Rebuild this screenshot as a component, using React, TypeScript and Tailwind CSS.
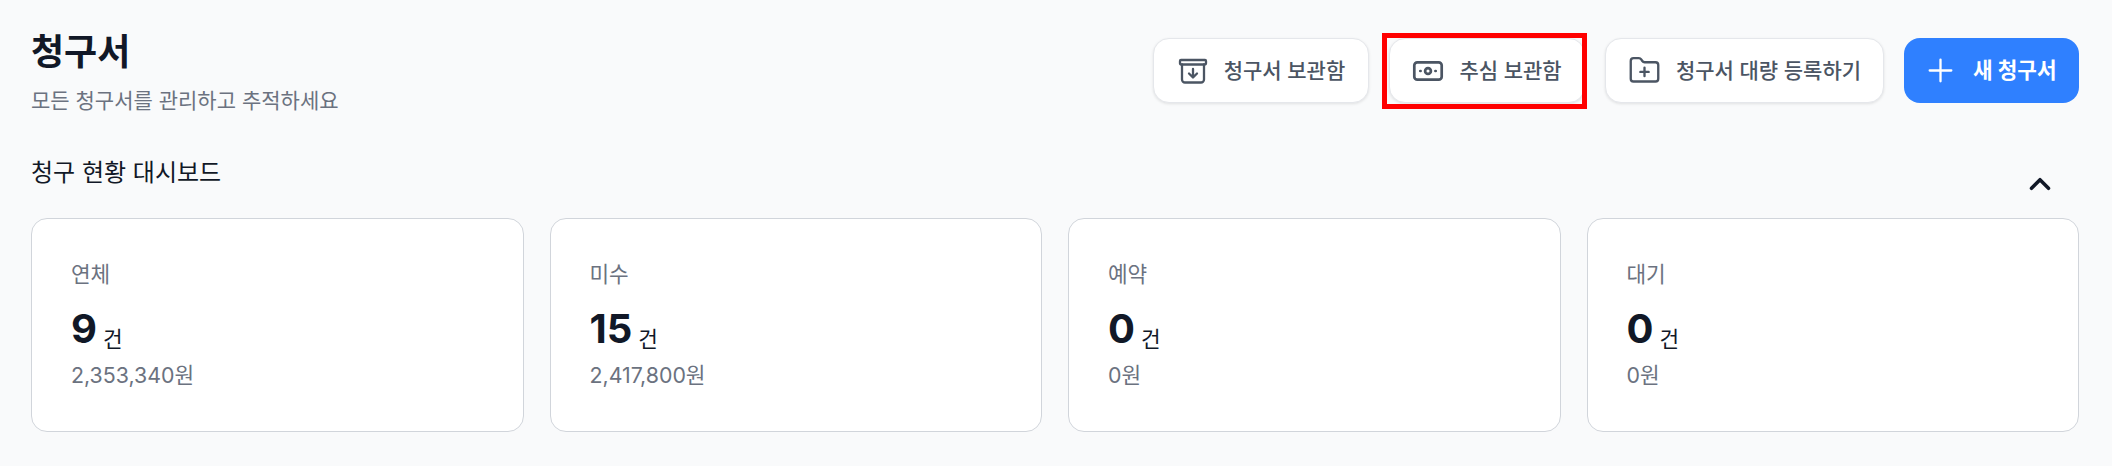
import { ChevronUp, FolderPlus, Plus } from 'lucide-react';

const FONT = "font-['Inter','Noto_Sans_CJK_KR',sans-serif]";

/* archive box with a down arrow */
function ArchiveIcon() {
  return (
    <svg width="32" height="32" viewBox="0 0 32 32" fill="none" stroke="#4b5563" strokeWidth="2.3" strokeLinecap="round" strokeLinejoin="round">
      <rect x="3" y="5" width="26" height="4.5" rx="1" />
      <path d="M5 9.5V24.5a3 3 0 0 0 3 3h16a3 3 0 0 0 3-3V9.5" />
      <path d="M16 14v8.5M12 18.5l4 4 4-4" />
    </svg>
  );
}

/* banknote */
function BillIcon() {
  return (
    <svg width="32" height="32" viewBox="0 0 32 32" fill="none" stroke="#4b5563" strokeWidth="2.7" strokeLinecap="round" strokeLinejoin="round">
      <rect x="2.3" y="7.3" width="27.4" height="17.4" rx="3" />
      <circle cx="16" cy="16" r="2.9" />
      <path d="M8.3 16h.3M23.4 16h.3" />
    </svg>
  );
}

function ToolButton({ icon, label, w, marked }: { icon: React.ReactNode; label: string; w: string; marked?: boolean }) {
  return (
    <button className={`relative flex h-[65px] items-center justify-center gap-[15px] rounded-[16px] border border-[#e5e7eb] bg-white text-[21px] font-medium text-[#4b5563] shadow-[0_1px_3px_rgba(0,0,0,0.1)] ${w}`}>
      {icon}
      <span>{label}</span>
      {marked && <span className="absolute -top-[6px] -right-[3px] -bottom-[7px] -left-[8px] border-[5px] border-[#ff0000]" />}
    </button>
  );
}

function StatCard({ label, count, amount }: { label: string; count: string; amount: string }) {
  return (
    <div className="h-[214px] rounded-[16px] border border-[#d1d5db] bg-white px-[39px] pt-[40px]">
      <div className="text-[21.33px] leading-[30px] text-[#6b7280]">{label}</div>
      <div className="mt-[16px] flex items-end gap-[6px] text-[#111827]">
        <span className="text-[40px] font-bold leading-[48px]">{count}</span>
        <span className="text-[21.33px] leading-[28px]">건</span>
      </div>
      <div className="mt-[7px] text-[21.33px] leading-[30px] text-[#6b7280]">{amount}</div>
    </div>
  );
}

export default function App() {
  return (
    <div className={`${FONT} h-[466px] w-[2112px] overflow-hidden bg-[#f9fafb] pl-[31px] pr-[33px]`}>
      <div className="flex items-start justify-between pt-[28px]">
        <div>
          <h1 className="text-[36px] font-bold leading-[48px] text-[#111827]">청구서</h1>
          <p className="mt-[10px] text-[21px] leading-[30px] text-[#6b7280]">모든 청구서를 관리하고 추적하세요</p>
        </div>
        <div className="mt-[10px] flex gap-[20px]">
          <ToolButton w="w-[216px]" icon={<ArchiveIcon />} label="청구서 보관함" />
          <ToolButton w="w-[196px]" icon={<BillIcon />} label="추심 보관함" marked />
          <ToolButton w="w-[279px]" icon={<FolderPlus size={33} color="#4b5563" strokeWidth={1.7} />} label="청구서 대량 등록하기" />
          <button className="flex h-[65px] w-[175px] items-center justify-start gap-[14px] rounded-[16px] bg-[#2f80ff] pl-[18px] text-[21.33px] font-bold text-white">
            <Plus size={37} strokeWidth={1.5} />
            <span>새 청구서</span>
          </button>
        </div>
      </div>
      <div className="mt-[29px] flex items-center justify-between">
        <h2 className="text-[24px] font-normal leading-[36px] text-[#111827]">청구 현황 대시보드</h2>
        <ChevronUp size={34} color="#111827" strokeWidth={2.5} className="mr-[22px] mt-[22px]" />
      </div>
      <div className="mt-[17px] grid grid-cols-4 gap-[26px]">
        <StatCard label="연체" count="9" amount="2,353,340원" />
        <StatCard label="미수" count="15" amount="2,417,800원" />
        <StatCard label="예약" count="0" amount="0원" />
        <StatCard label="대기" count="0" amount="0원" />
      </div>
    </div>
  );
}
